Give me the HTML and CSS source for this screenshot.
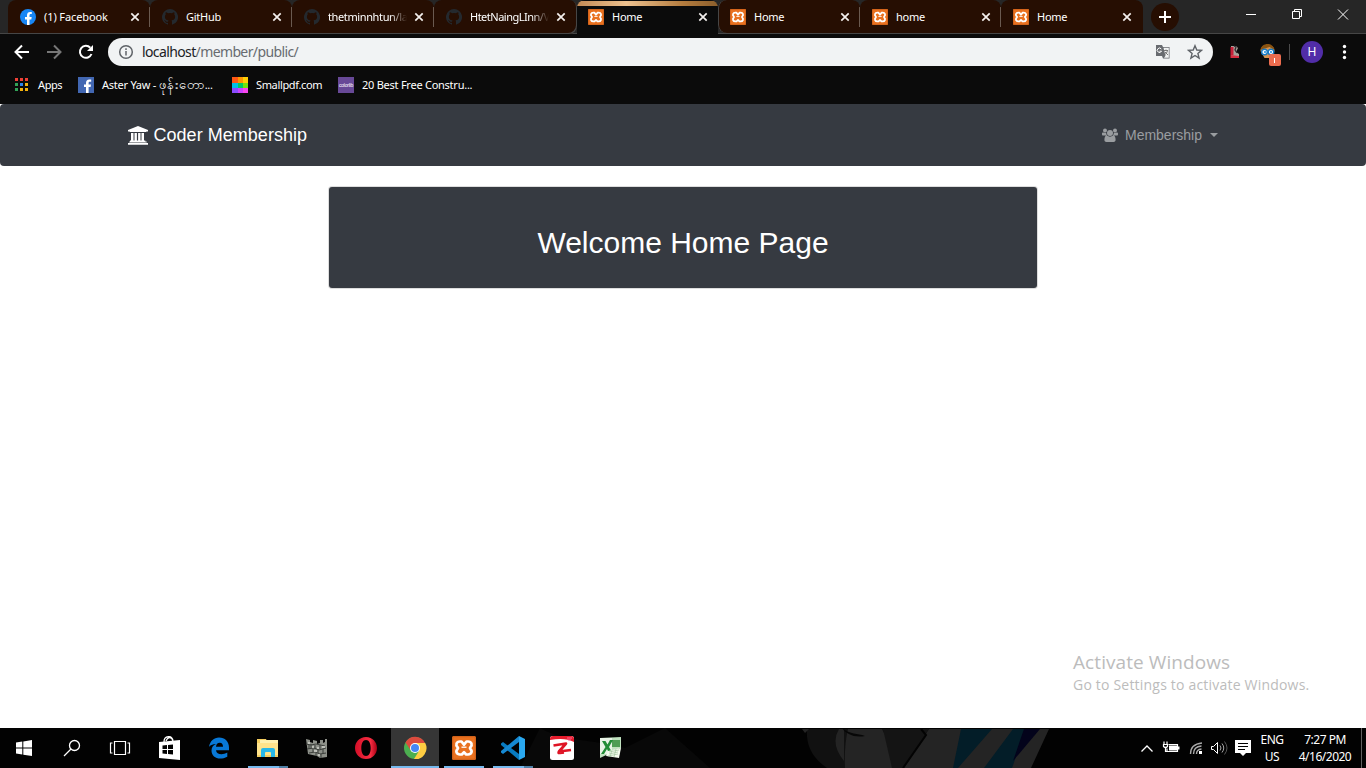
FILE: index.html
```html
<!DOCTYPE html>
<html lang="en">
<head>
<meta charset="utf-8">
<title>Home</title>
<link rel="stylesheet" href="styles.css">
</head>
<body>
<svg class="defs" width="0" height="0" aria-hidden="true">
  <symbol id="octocat" viewBox="0 0 16 16"><path d="M8 0a8 8 0 0 0-2.53 15.59c.4.07.55-.17.55-.38v-1.34c-2.23.48-2.7-1.07-2.7-1.07-.36-.93-.89-1.17-.89-1.17-.73-.5.06-.49.06-.49.8.06 1.23.83 1.23.83.71 1.22 1.87.87 2.33.66.07-.52.28-.87.5-1.07-1.77-.2-3.64-.89-3.64-3.95 0-.87.31-1.59.82-2.15-.08-.2-.36-1.02.08-2.12 0 0 .67-.21 2.2.82a7.6 7.6 0 0 1 4 0c1.53-1.04 2.2-.82 2.2-.82.44 1.1.16 1.92.08 2.12.51.56.82 1.27.82 2.15 0 3.07-1.87 3.75-3.65 3.95.29.25.54.73.54 1.48v2.19c0 .21.15.46.55.38A8 8 0 0 0 8 0Z" fill="#24292e"/></symbol>
  <symbol id="xampp" viewBox="0 0 24 24"><rect width="24" height="24" rx="1.5" fill="#e9711f"/><rect x=".7" y=".7" width="22.6" height="22.6" rx="1" fill="none" stroke="#c95e19"/><path d="M8 5.500C4.300 5.500 3.300 9 5.600 11.200q.9.900 0 1.800C3.300 15.200 4.500 18.500 8 18.500h1.800L12 16.300l2.200 2.200H16c3.500 0 4.700-3.300 2.400-5.500q-.9-.9 0-1.800C20.700 9 19.700 5.500 16 5.500h-1.500L12 8.700 9.500 5.500z" fill="none" stroke="#fff" stroke-width="2.700" stroke-linejoin="round"/><path d="M9.500 11.200h5" stroke="#fff" stroke-width="1.300"/></symbol>
  <symbol id="close" viewBox="0 0 10 10"><path d="M1.300 1.300 8.700 8.700M8.700 1.300 1.300 8.700" stroke="#f4f0ee" stroke-width="1.700"/></symbol>
</svg>

<header class="browser">
  <div class="tabstrip">
    <div class="tab"><svg class="fav" viewBox="0 0 16 16"><circle cx="8" cy="8" r="8" fill="#1886f5"/><path d="M7 16v-5.600H5V8h2V6.300C7 4.200 8.200 3 10.100 3l1.700.1v2h-1c-1 0-1.300.6-1.300 1.300V8h2.200l-.4 2.400H9.500V16z" fill="#fff"/></svg><span class="label facebook">(1) Facebook</span><svg class="x"><use href="#close"/></svg></div>
    <div class="tab"><svg class="fav"><use href="#octocat"/></svg><span class="label">GitHub</span><svg class="x"><use href="#close"/></svg></div>
    <div class="tab"><svg class="fav"><use href="#octocat"/></svg><span class="label long">thetminnhtun/la</span><svg class="x"><use href="#close"/></svg></div>
    <div class="tab last-left"><svg class="fav"><use href="#octocat"/></svg><span class="label long tight">HtetNaingLInn/V</span><svg class="x"><use href="#close"/></svg></div>
    <div class="tab active"><svg class="fav"><use href="#xampp"/></svg><span class="label">Home</span><svg class="x"><use href="#close"/></svg></div>
    <div class="tab first-right"><svg class="fav"><use href="#xampp"/></svg><span class="label">Home</span><svg class="x"><use href="#close"/></svg></div>
    <div class="tab seventh"><svg class="fav"><use href="#xampp"/></svg><span class="label">home</span><svg class="x"><use href="#close"/></svg></div>
    <div class="tab last"><svg class="fav"><use href="#xampp"/></svg><span class="label">Home</span><svg class="x"><use href="#close"/></svg></div>
    <div class="newtab"><svg width="28" height="28"><path d="M8 14h12M14 8v12" stroke="#fff" stroke-width="2"/></svg></div>
    <svg class="winctl" width="126" height="30" fill="none" stroke="#fff"><path d="M6 14.500h10M52.500 11.500h7v7h-7zM54.500 11.500v-2h7v7h-2M98 9.500l10 10M108 9.500l-10 10"/></svg>
  </div>

  <div class="toolbar">
    <svg class="nav" width="100" height="36" fill="none" stroke-width="2"><path d="M21 18H8M14 11.500 7.500 18l6.500 6.500" stroke="#fff"/><path d="M39 18h13M46 11.500l6.500 6.500-6.500 6.500" stroke="#777"/><path d="M82.300 13.700A6 6 0 1 0 83.500 20" stroke="#fff"/><path d="M85 11v6h-6z" fill="#fff"/></svg>
    <div class="omnibox">
      <svg width="16" height="16" fill="none" stroke="#5f6368" stroke-width="1.500"><circle cx="8" cy="8" r="6.300"/><path d="M8 7v4.500M8 4.300V6"/></svg>
      <span class="url">localhost<span>/member/public/</span></span>
      <svg class="translate" width="16" height="16"><path d="M1 1h6l1 2h6.500v11.500H8l-1-2.500H1z" fill="#686b70"/><path d="M8.500 3.800h5.300v10H9l1.500-2z" fill="#f1f3f4"/><path d="M6.300 5A2.200 2.200 0 1 0 6.500 7.200H4.500" fill="none" stroke="#fff"/><path d="M9 6.500h4M11 5.500v1M12.500 6.500c-.4 2-1.600 3.600-3 4.500M10 8l3 3" fill="none" stroke="#777"/></svg>
      <svg width="16" height="16"><path d="M8 1.700 9.800 6l4.700.4-3.600 3 1.200 4.700L8 11.500l-4.100 2.600 1.200-4.700-3.600-3L6.200 6z" fill="none" stroke="#5f6368" stroke-width="1.400"/></svg>
    </div>
    <svg class="extensions" width="143" height="36">
      <path d="M18 12h5l2 2-2 4 3 2v3h-8z" fill="#a9a19a"/><path d="M17.500 13h3v8h-3z" fill="#c72039"/><path d="M17.500 21l8.500 1v2h-8.500z" fill="#d72c40"/><path d="M21 12l2 1-1 3 2 3" stroke="#332c32" fill="none" stroke-width="1.300"/>
      <path d="M47.500 17c0-8 14-8 14 0l-3 7h-7z" fill="#d79552"/><path d="M47.500 16c1-8 13-8 14 0l-5-3-6 2z" fill="#8a5310"/><circle cx="51.500" cy="18" r="2.800" fill="#fff" stroke="#177bc6" stroke-width="1.400"/><circle cx="58" cy="18" r="2.800" fill="#fff" stroke="#177bc6" stroke-width="1.400"/><circle cx="52" cy="18" r="1" fill="#168fe1"/><circle cx="58" cy="18" r="1" fill="#168fe1"/><rect x="56" y="20" width="12" height="12" rx="2" fill="#ec6c4e"/><path d="M61.500 24v5" stroke="#fff"/>
      <path d="M76.500 10v16" stroke="#4b4b4b"/><circle cx="99" cy="18" r="11" fill="#512da8"/><text x="99" y="22" class="avatar">H</text>
      <g fill="#fff"><circle cx="131.500" cy="12.500" r="1.700"/><circle cx="131.500" cy="18" r="1.700"/><circle cx="131.500" cy="23.500" r="1.700"/></g>
    </svg>
  </div>

  <nav class="bookmarks">
    <a class="apps"><svg width="14" height="14"><path d="M0 0h3v3H0zM5 0h3v3H5zM10 0h3v3h-3z" fill="#ef4036"/><path d="M0 5h3v3H0zM0 10h3v3H0z" fill="#31a357"/><path d="M5 5h3v3H5z" fill="#2d83ed"/><path d="M10 5h3v3h-3zM5 10h3v3H5zM10 10h3v3h-3z" fill="#f4b20d"/></svg><span>Apps</span></a>
    <a class="aster"><svg width="16" height="16"><path d="M0 0h16v16H0z" fill="#4267b2"/><path d="M8 16v-6H6V7.500h2V6c0-2.300 1.200-3.500 3.200-3.500l2 .1v2.200h-1.300c-1 0-1.300.5-1.300 1.300v1.400H13l-.4 2.500h-2v6z" fill="#fff"/></svg><span>Aster Yaw - <bdi>ဖုန်းတော</bdi>...</span></a>
    <a class="small"><svg width="16" height="16"><path d="M0 0h6v6H0z" fill="#ff5714"/><path d="M6 0h5v6H6z" fill="#ff9600"/><path d="M11 0h5v6h-5z" fill="#ffcf06"/><path d="M0 6h6v5H0z" fill="#01bfe9"/><path d="M6 6h5v5H6z" fill="#01ca62"/><path d="M11 6h5v5h-5z" fill="#71e50c"/><path d="M0 11h6v5H0z" fill="#8b4cff"/><path d="M6 11h5v5H6z" fill="#cc42ff"/><path d="M11 11h5v5h-5z" fill="#f947ef"/></svg><span>Smallpdf.com</span></a>
    <a class="best"><i>colorlib</i><span>20 Best Free Constru...</span></a>
  </nav>
</header>

<main class="page">
  <nav class="navbar">
    <a class="brand"><svg width="20" height="19" viewBox="0 0 20 19" fill="#fff"><path d="M10 0l10 4v1.500h-1.400L18 6H2l-.6-.5H0V4zM1.300 15.500h17.400v1H1.300zM0 17h20v1.700H0zM3 7h2.500v7.500h1V7h2.400v7.500h1.200V7h2.400v7.500h1V7H16v7.500h1.300v1H2v-1h1z"/></svg><span>Coder Membership</span></a>
    <a class="menu"><svg width="16" height="15" viewBox="0 0 16 15" fill="#9a9da0"><circle cx="3" cy="2.500" r="2"/><circle cx="13" cy="2.500" r="2"/><circle cx="8" cy="5" r="3"/><path d="M0 5.500C0 4.500 1 4.200 2 4.700h2.200C4.200 6 4.600 7 5.300 7.500H1C.4 7.500 0 7 0 6.500zM16 5.500c0-1-1-1.300-2-.8h-2.200c0 1.300-.4 2.300-1.100 2.800H15c.6 0 1-.5 1-1zM4.900 7.600c1.800 1.400 4.400 1.400 6.200 0C13 7.600 13.600 9.500 13.600 12c0 1.300-.9 2-2 2H4.400c-1.200 0-2-.7-2-2 0-2.500.7-4.400 2.500-4.400z"/></svg><span>Membership</span><b></b></a>
  </nav>
  <section class="card"><h1>Welcome Home Page</h1></section>
  <aside class="activate"><div>Activate Windows</div><p>Go to Settings to activate Windows.</p></aside>
</main>

<footer class="taskbar">
  <svg class="wall" width="1366" height="40">
    <path d="M540 0c35 20 75 5 130 40H520zM625 20l40-20 45 40h-60z" fill="#080808"/>
    <path d="M807 1h100v39h-80q-22-15-20-39" fill="#111"/>
    <path d="M802 1h7l-4 4zM839 1h5v32q-14-17-5-32M848 1h34q11 20 10 39h-47q-1-22 3-39" fill="#242424"/>
    <path d="M842 0c9 7 15 5 23 8-11 2-19-2-23-8" fill="#070707"/>
    <path d="M883 1h46l-25 39h-12z" fill="#141414"/><path d="M929 1h120l-18 39H904z" fill="#242424"/><path d="M961 1h31l-34 39h-5zM1013 1h13l-14 39h-28z" fill="#031d28"/><path d="M1024 1h16l-27 32z" fill="#03031b"/><path d="M921 1l5 6-23 33" stroke="#030303" fill="none" stroke-width="2"/>
  </svg>
  <div class="task sys"><svg viewBox="0 0 24 24" fill="#fff"><path d="M4 6.500 10.300 5.600v6H4zM11.300 5.400 20 4v7.600h-8.700zM4 12.600h6.300v6L4 17.600zM11.300 12.600H20V20l-8.700-1.200z"/></svg></div>
  <div class="task sys"><svg viewBox="0 0 24 24" fill="none" stroke="#fff" stroke-width="1.300"><circle cx="14.500" cy="9.500" r="5"/><path d="M11 13 4 20"/></svg></div>
  <div class="task sys"><svg viewBox="0 0 24 24" fill="none" stroke="#fff" stroke-width="1.200"><path d="M6.500 5.500h11v13h-11zM4.500 7h-2v10h2M19.500 7h2v10h-2"/></svg></div>
  <div class="task first"><svg viewBox="0 0 24 24"><path d="M1 6 22 4v20L1 22z" fill="#fff"/><path d="M6 6C6-1 15-1 15 5M8 5c2-5 6-4 7 0" fill="none" stroke="#fff" stroke-width="1.300"/><path d="M4.500 9.500 9 9v4H4.500zM10 9l5-.5V13h-5zM4.500 14H9v4l-4.500-.5zM10 14h5v4.500l-5-.5z" fill="#000"/></svg></div>
  <div class="task"><svg viewBox="0 0 24 24"><path d="M2 11C3 5 7 1.500 12 1.500c6 0 10 4 10 10v2.700H9c.3 4 6 5.300 11.300 2.300v4.300C12 25 4.500 21.500 4.500 14.500c0-3.500 2-5.500 4.500-6.500-3.500.2-6 1.200-7 3zm7-.2h7c0-2-.8-4-3.300-4-2.200 0-3.400 1.500-3.700 4z" fill="#0878d7" fill-rule="evenodd"/></svg></div>
  <div class="task open split"><svg viewBox="0 0 24 24"><path d="M1 3h9l1 2h11v16H1z" fill="#f5ce60"/><path d="M4 4h18v3H4z" fill="#fff1b0"/><path d="M1 7h21v12H1z" fill="#ffe38b"/><path d="M5 14q0-2 2-2h10q2 0 2 2v7h-4v-4q0-1-1-1h-4q-1 0-1 1v4H5z" fill="#28b8e8"/></svg></div>
  <div class="task"><svg viewBox="0 0 24 24"><path d="M1 3l4 1v2l3 1V4l4 1v3l3-1V4h3v3l2-1V3h2v18l-7 1-3-2-9-2z" fill="#8d9089"/><path d="M1 8l5 1 5-1 9 2M2 13l7-1 5 2 7-2M4 17l6-1 5 2 6-1M6 8v4M10 9v4M15 9v4M8 13v3M13 13v4M18 13v4M11 17v3M16 18v4M4 9v4" stroke="#3b3e3a" fill="none" stroke-width="1"/><path d="M3 7h2M7 11h2M12 12h2M9 15h3M17 11h3M13 19h2" stroke="#cfd1ca" stroke-width="1.500"/></svg></div>
  <div class="task"><svg viewBox="0 0 24 24"><defs><linearGradient id="opera" x1="0" x2="1"><stop stop-color="#d50f28"/><stop offset=".7" stop-color="#f82e42"/><stop offset="1" stop-color="#a70014"/></linearGradient></defs><path d="M12 1C5.500 1 1 6 1 12s4.500 11 11 11 11-5 11-11S18.500 1 12 1m0 3c3 0 4.700 3.500 4.700 8S15 20 12 20s-4.700-3.500-4.700-8S9 4 12 4" fill="url(#opera)" fill-rule="evenodd"/></svg></div>
  <div class="task open current"><svg viewBox="0 0 24 24"><circle cx="12" cy="12" r="11" fill="#4caf50"/><path d="M2.500 6.500A11 11 0 0 1 22 7H12l-4.500 7z" fill="#dc4b3e"/><path d="M12 7h10.200A11 11 0 0 1 11 23l5-8z" fill="#ffcd42"/><circle cx="12" cy="12" r="5" fill="#fff"/><circle cx="12" cy="12" r="4" fill="#4587f4"/></svg></div>
  <div class="task open"><svg><use href="#xampp"/></svg></div>
  <div class="task open split"><svg viewBox="0 0 24 24"><path d="M0 7.500 2 6l16 12v6L0 9z" fill="#087bc1"/><path d="M0 16.500 2 18 18 6V0L0 15z" fill="#1689d2"/><path d="M18 0l6 3v18l-6 3z" fill="#2aa8ef"/></svg></div>
  <div class="task"><svg viewBox="0 0 24 24"><rect width="24" height="24" rx="2.500" fill="#fff"/><path d="M0 4V3q0-3 3-3h18q3 0 3 3v3Q15 1 0 4" fill="#e51b2b"/><path d="M3.500 9.500 16 7.500 9 15.500l12-1.500" fill="none" stroke="#df1425" stroke-width="2.700" stroke-linejoin="round"/><path d="M9 15.500q-2 2 1 1.800l4-.6" fill="none" stroke="#df1425" stroke-width="2"/><path d="M17 2h5M18 4h3" stroke="#f69" /></svg></div>
  <div class="task"><svg viewBox="0 0 24 24"><path d="M1 2 22 1v11L1 22z" fill="#bfe1be"/><path d="M13 4h8v7h-8z" fill="#4f9e55"/><path d="M1 2h12v16H1z" fill="#e8f3e6"/><path d="M3 5h3.500l2 3.500L11 4h3l-4 7 4 7h-3.500L8 13l-3 5H2l4.500-7z" fill="#218c36"/><path d="M9 15l13-3-2 10-13-2z" fill="#f4faee"/><path d="M10 16l10-2M10 18l9-2M9 20l10-2M13 14l-2 7M17 13l-2 8" stroke="#a1c59e" stroke-width=".7"/></svg></div>
  <div class="tray">
    <svg width="120" height="40" fill="none" stroke="#fff"><path d="M1.500 23.500 7 18l5.500 5.500" stroke-width="1.300"/><path d="M28.500 16.500h9v7H27v-3" stroke-width="1.200"/><path d="M29 17.500h8v5h-8zM38 18.500h1.500v3H38z" fill="#fff" stroke="none"/><path d="M24 13.500v3M27 13.500v3M23.500 16.500h4v2q-2 2-4 0zM25.500 20v3.500H28" stroke-width="1.200"/><path d="M50.500 26q0-10 11.500-11M53.500 26q0-7.500 8-8M56.500 26q0-4.500 5-5" stroke="#aaa" stroke-width="1.400"/><path d="M59 23h3v3h-3z" fill="#fff" stroke="none"/><path d="M71.500 18.500h2l4-4v11l-4-4h-2z"/><path d="M80 17.500q2 2.500 0 5M82 15.500q3.500 4.500 0 9" stroke="#aaa"/><path d="M84.500 13.500q5 6.500 0 13" stroke="#555"/><path d="M95 12h16v13h-5l-3 3-3-3h-5z" fill="#fff" stroke="none"/><path d="M98 15.500h10M98 18.500h10M98 21.500h7" stroke="#000"/></svg>
    <div class="lang">ENG<br>US</div><div class="clock">7:27 PM<br>4/16/2020</div><i class="peek"></i>
  </div>
</footer>
</body>
</html>
```
FILE: styles.css
```css
* { box-sizing: border-box; }
body { margin: 0; width: 1366px; height: 768px; overflow: hidden; display: flex; flex-direction: column; background: #fff; font-family: "Noto Sans", sans-serif; }
svg { display: block; flex: none; }
.defs { position: absolute; }
.browser { height: 104px; background: #0b0b0b; color: #fff; flex: none; font-size: 11px; }
.tabstrip { height: 34px; display: flex; padding-left: 8px; background: #262626; border-bottom: 1px solid #464646; }
.tab { width: 142px; height: 33px; display: flex; align-items: center; background: linear-gradient(#6a5a50, #6a5a50) 100% 7px / 1px 20px no-repeat #260e02; padding: 0 13px 0 12px; border-radius: 8px 8px 0 0; flex: none; }
.tab.last-left { width: 143px; padding-right: 14px; height: 34px; padding-bottom: 1px; border-radius: 8px 8px 8px 0; box-shadow: inset -1px -1px #464646; background: #260e02; }
.tab.last { width: 142px; padding-right: 14px; background: #260e02; }
.tab.seventh { width: 141px; padding-right: 13px; }
.tab.first-right { border-bottom-left-radius: 8px; box-shadow: inset 1px 0 #464646; }
.tab.active { width: 141px; padding-left: 11px; height: 34px; background: linear-gradient(90deg, #c38a55, #edc18f 35%, #b47c3e 75%, #8c5f2c) 0 1px / 100% 5px no-repeat #0b0b0b; padding-bottom: 1px; }
.fav { width: 16px; height: 16px; }
.label { width: 79px; margin-left: 8px; overflow: hidden; white-space: nowrap; line-height: 18px; letter-spacing: -.25px; flex: none; }
.facebook { letter-spacing: -.1px; }
.long { letter-spacing: -.38px; -webkit-mask-image: linear-gradient(90deg, #000 78%, transparent); mask-image: linear-gradient(90deg, #000 78%, transparent); }
.tight { letter-spacing: -.5px; }
.x { width: 10px; height: 10px; margin-left: auto; margin-right: -3px; }
.newtab { width: 28px; height: 28px; border-radius: 50%; background: #260e02; margin: 3px 0 0 8px; }
.winctl { margin-left: auto; }
.toolbar { height: 36px; display: flex; align-items: center; padding-left: 8px; }
.omnibox { height: 28px; width: 1105px; border-radius: 14px; background: #f1f3f4; color: #202124; display: flex; align-items: center; padding: 0 10px; }
.url { font-size: 14px; margin-left: 8px; letter-spacing: -.62px; line-height: 24px; }
.url span { color: #686b70; }
.translate { margin-left: auto; margin-right: 16px; }
.extensions { margin-left: 0; }
.avatar { font: 12px "Noto Sans", sans-serif; fill: #fff; text-anchor: middle; }
.bookmarks { height: 30px; display: flex; align-items: center; white-space: nowrap; }
.bookmarks a { display: flex; align-items: center; gap: 8px; line-height: 18px; letter-spacing: -.25px; }
.bookmarks .apps { width: 64px; margin-left: 15px; gap: 9px; letter-spacing: -.4px; }
.bookmarks .aster { width: 153px; margin-left: -1px; }
.bookmarks .small { width: 107px; margin-left: 1px; letter-spacing: -.35px; }
.bookmarks .best { margin-left: -1px; }
.best i { width: 16px; height: 16px; background: #684997; font: 5px/16px "Liberation Sans", sans-serif; letter-spacing: -.2px; text-align: center; }
bdi { font-size: 13px; line-height: 1; letter-spacing: 0; }
.page { flex: 1; min-height: 0; position: relative; font-family: "Liberation Sans", Arial, sans-serif; }
.navbar { height: 62px; background: #363a41; border-radius: 4px; padding: 0 148px 0 128px; display: flex; justify-content: space-between; align-items: center; }
.brand { display: flex; align-items: center; gap: 5.5px; color: #fff; font-size: 18px; letter-spacing: .03px; }
.menu { display: flex; align-items: center; color: #9a9da0; font-size: 14px; }
.menu span { margin-left: 7px; }
.menu b { margin-left: 8px; border: 4px solid transparent; border-top-color: #9a9da0; border-bottom: 0; }
.card { width: 708px; height: 101px; margin: 21px auto 0; display: flex; justify-content: center; align-items: center; background: #363a41; border-radius: 3px; box-shadow: 0 0 0 1px #ddd; color: #fff; }
h1 { margin: 10px 0 0; font-size: 30px; font-weight: 400; line-height: 36px; }
.activate { position: absolute; left: 1073px; top: 545px; color: #bcbcbc; font-family: "Open Sans", sans-serif; white-space: nowrap; }
.activate div { font-size: 19px; line-height: 27px; letter-spacing: .08px; }
.activate p { margin: 0; font-size: 14px; line-height: 18px; letter-spacing: .2px; }
.taskbar { height: 40px; background: #020202; display: flex; position: relative; color: #fff; flex: none; }
.wall { position: absolute; inset: 0; }
.task { position: relative; width: 48px; height: 40px; margin-right: 1px; display: flex; justify-content: center; align-items: center; flex: none; }
.task.sys { margin: 0; }
.task.first { margin-left: 2px; }
.task svg { width: 24px; height: 24px; }
.open { background: linear-gradient(#76b9ed, #76b9ed) 4px 38px / 40px 2px no-repeat; }
.split { background: linear-gradient(90deg, #76b9ed 31px, #4f80a6 31px) 4px 38px / 40px 2px no-repeat; }
.current { background: linear-gradient(#76b9ed, #76b9ed) 0 38px / 48px 2px no-repeat #363636; }
.tray { margin-left: auto; position: relative; display: flex; width: 226px; font-size: 12px; line-height: 17px; text-align: center; }
.lang, .clock { padding-top: 3px; white-space: nowrap; flex: none; }
.lang { width: 26px; margin-left: -1px; letter-spacing: -.55px; }
.clock { width: 54px; margin-left: 13px; letter-spacing: -.5px; }
.peek { width: 1px; height: 40px; background: #606060; margin-left: 9px; }
```
